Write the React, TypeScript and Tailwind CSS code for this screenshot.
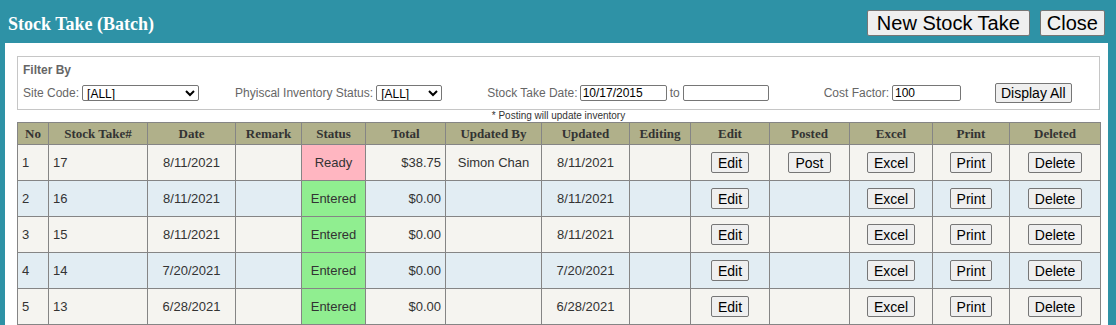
import React from "react";

type Row = {
  no: number;
  id: number;
  date: string;
  status: "Ready" | "Entered";
  total: string;
  updatedBy: string;
  updated: string;
  canPost: boolean;
};

const rows: Row[] = [
  { no: 1, id: 17, date: "8/11/2021", status: "Ready", total: "$38.75", updatedBy: "Simon Chan", updated: "8/11/2021", canPost: true },
  { no: 2, id: 16, date: "8/11/2021", status: "Entered", total: "$0.00", updatedBy: "", updated: "8/11/2021", canPost: false },
  { no: 3, id: 15, date: "8/11/2021", status: "Entered", total: "$0.00", updatedBy: "", updated: "8/11/2021", canPost: false },
  { no: 4, id: 14, date: "7/20/2021", status: "Entered", total: "$0.00", updatedBy: "", updated: "7/20/2021", canPost: false },
  { no: 5, id: 13, date: "6/28/2021", status: "Entered", total: "$0.00", updatedBy: "", updated: "6/28/2021", canPost: false },
];

const headers = [
  "No", "Stock Take#", "Date", "Remark", "Status", "Total", "Updated By",
  "Updated", "Editing", "Edit", "Posted", "Excel", "Print", "Deleted",
];
const widths = [31, 99, 88, 66, 64, 80, 96, 88, 61, 79, 80, 83, 77, 91];

function Btn({ children }: { children: React.ReactNode }) {
  return (
    <button className="h-[21px] px-[6px] bg-[#efefef] border border-[#767676] rounded-[2px] text-[14px] leading-none text-black">
      {children}
    </button>
  );
}

function Select({ width }: { width: string }) {
  return (
    <select className={`${width} h-[16px] border border-[#767676] rounded-[2px] text-[12px] font-normal leading-none text-black bg-white px-0`}>
      <option>[ALL]</option>
    </select>
  );
}

export default function App() {
  const cell = "border border-[#858585] px-[4px] text-[13px] text-[#333]";
  const field = "h-[16px] border border-[#767676] rounded-[2px] px-[2px] text-[12px] font-normal text-black";

  return (
    <div className="w-[1116px] h-[325px] overflow-hidden bg-[#2e92a6] font-['Liberation_Sans',Arial,sans-serif]">
      <div className="h-[43px] flex items-start justify-between">
        <h1 className="pl-[8px] pt-[11px] text-[18px] font-bold text-white font-['Liberation_Serif',serif]">
          Stock Take (Batch)
        </h1>
        <div className="flex gap-[10px] pt-[10px] pr-[11px]">
          <button className="h-[26px] px-[9px] bg-[#efefef] border border-[#767676] rounded-[2px] text-[20px] leading-none text-black">
            New Stock Take
          </button>
          <button className="h-[26px] px-[6px] bg-[#efefef] border border-[#767676] rounded-[2px] text-[20px] leading-none text-black">
            Close
          </button>
        </div>
      </div>

      <div className="ml-[5px] mr-[8px] h-[282px] bg-white pt-[13px] pl-[12px] pr-[8px]">
        <div className="h-[54px] border border-[#c6c6c6] px-[5px] pt-[4px] text-[12px] text-[#666] whitespace-nowrap">
          <div className="font-bold">Filter By</div>
          <div className="flex items-center mt-[4px]">
            <span>Site Code:</span>
            <span className="ml-[3px] flex"><Select width="w-[117px]" /></span>
            <span className="ml-[36px]">Phyiscal Inventory Status:</span>
            <span className="ml-[3px] flex"><Select width="w-[66px]" /></span>
            <span className="ml-[45px]">Stock Take Date:</span>
            <input defaultValue="10/17/2015" className={`ml-[2px] w-[87px] ${field}`} />
            <span className="ml-[3px]">to</span>
            <input className={`ml-[3px] w-[86px] ${field}`} />
            <span className="ml-[55px]">Cost Factor:</span>
            <input defaultValue="100" className={`ml-[3px] w-[69px] ${field}`} />
            <button className="ml-[34px] h-[20px] px-[5px] bg-[#efefef] border border-[#767676] rounded-[2px] text-[14px] leading-none text-black">
              Display All
            </button>
          </div>
        </div>

        <div className="h-[12px] text-center text-[10px] leading-[12px] text-[#333] whitespace-nowrap">
          * Posting will update inventory
        </div>

        <table className="table-fixed border-collapse w-[1084px]">
          <colgroup>
            {widths.map((w, i) => (
              <col key={i} style={{ width: w }} />
            ))}
          </colgroup>
          <thead>
            <tr className="h-[22px] bg-[#b0b08a]">
              {headers.map((h) => (
                <th key={h} className="border border-[#858585] text-[13px] font-bold text-[#333] font-['Liberation_Serif',serif] text-center">
                  {h}
                </th>
              ))}
            </tr>
          </thead>
          <tbody>
            {rows.map((r, i) => (
              <tr key={r.no} className={`h-[36px] ${i % 2 === 0 ? "bg-[#f5f4f0]" : "bg-[#e2edf3]"}`}>
                <td className={`${cell} text-left`}>{r.no}</td>
                <td className={`${cell} text-left`}>{r.id}</td>
                <td className={`${cell} text-center`}>{r.date}</td>
                <td className={cell}></td>
                <td className={`${cell} text-center ${r.status === "Ready" ? "bg-[#ffb6c1]" : "bg-[#90ee90]"}`}>{r.status}</td>
                <td className={`${cell} text-right`}>{r.total}</td>
                <td className={`${cell} text-center`}>{r.updatedBy}</td>
                <td className={`${cell} text-center`}>{r.updated}</td>
                <td className={cell}></td>
                <td className={`${cell} text-center`}><Btn>Edit</Btn></td>
                <td className={`${cell} text-center`}>{r.canPost && <Btn>Post</Btn>}</td>
                <td className={`${cell} text-center`}><Btn>Excel</Btn></td>
                <td className={`${cell} text-center`}><Btn>Print</Btn></td>
                <td className={`${cell} text-center`}><Btn>Delete</Btn></td>
              </tr>
            ))}
          </tbody>
        </table>
      </div>
    </div>
  );
}
